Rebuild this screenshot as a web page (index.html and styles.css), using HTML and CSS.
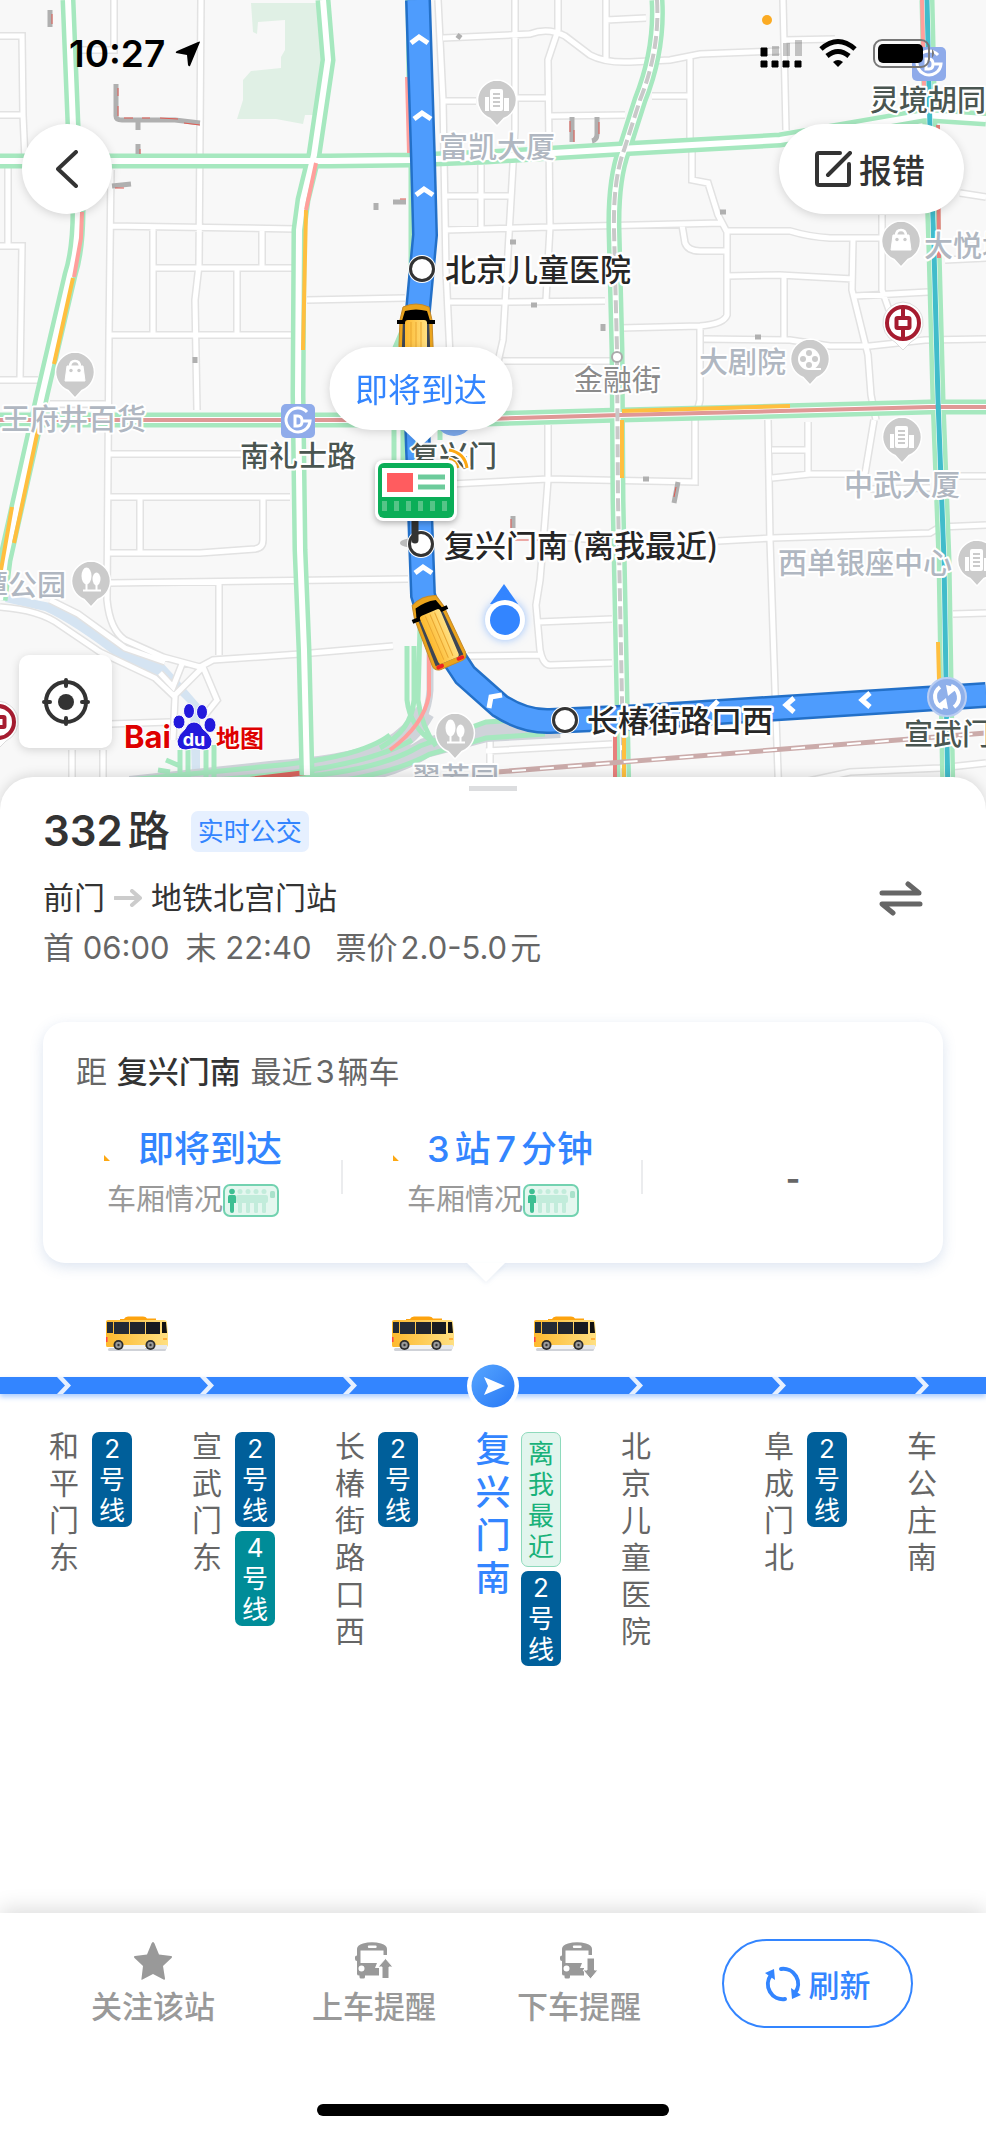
FILE: index.html
```html
<!DOCTYPE html>
<html lang="zh-CN">
<head>
  <meta charset="UTF-8" />
  <meta name="viewport" content="width=device-width, initial-scale=1.0" />
  <title>332路 - 实时公交</title>
  <link rel="stylesheet" href="styles.css">
</head>
<body>
  <!-- shared icons -->
  <svg class="defs" width="0" height="0" aria-hidden="true">
    <defs>
      <linearGradient id="busPaint" x1="0" y1="0" x2="1" y2="0">
        <stop offset="0" stop-color="#fdb92e" />
        <stop offset="1" stop-color="#ffe082" />
      </linearGradient>
      <linearGradient id="nowPaint" x1="0" y1="0" x2="1" y2="1">
        <stop offset="0" stop-color="#56a5ff" />
        <stop offset="1" stop-color="#2878f5" />
      </linearGradient>

      <symbol id="busSide" viewBox="0 0 64 36">
        <rect x="3" y="32" width="58" height="3" rx="1.500" fill="#cfd2d8" />
        <path d="M19 3 Q20 0.500 23 0.500 H38 Q41 0.500 42 2.500 H51 V5 H15 V3 Z" fill="#fda30e" />
        <path d="M3 4 H59 Q62 4 62 7 L63 18 V29 Q63 31 61 31 H2 Q1 31 1 29 V6 Q1 4 3 4 Z" fill="url(#busPaint)" />
        <rect x="2" y="6" width="6" height="11" fill="#242b35" />
        <rect x="9" y="6" width="15" height="12" fill="#242b35" />
        <rect x="25" y="6" width="15" height="12" fill="#20252d" />
        <rect x="41" y="6" width="14" height="12" fill="#181b20" />
        <path d="M57 6 H61 L62 17 H57 Z" fill="#111" />
        <rect x="1" y="21" width="1.500" height="5" fill="#f44" />
        <rect x="58" y="22" width="4" height="2" fill="#ffb03a" />
        <rect x="18" y="29" width="22" height="4" fill="#f2f2f2" />
        <rect x="50" y="29" width="12" height="4" fill="#e6e8eb" />
        <circle cx="13.500" cy="29" r="5" fill="#2b2b2b" /><circle cx="13.500" cy="29" r="3.200" fill="#9a9a9a" /><circle cx="13.500" cy="29" r="1.200" fill="#333" />
        <circle cx="45.500" cy="29" r="5" fill="#2b2b2b" /><circle cx="45.500" cy="29" r="3.200" fill="#9a9a9a" /><circle cx="45.500" cy="29" r="1.200" fill="#333" />
      </symbol>

      <symbol id="crowd" viewBox="0 0 56 33">
        <rect x="1" y="1" width="54" height="31" rx="6" fill="#e4f7ef" stroke="#72d2b0" stroke-width="2" />
        <g fill="#c2ecdb">
          <circle cx="17" cy="7.500" r="2.500" /><circle cx="25" cy="7.500" r="2.500" /><circle cx="33" cy="7.500" r="2.500" /><circle cx="41" cy="7.500" r="2.500" />
          <rect x="13" y="11" width="32" height="8" rx="2" />
          <rect x="15" y="17" width="4" height="12" rx="1.500" /><rect x="23" y="17" width="4" height="12" rx="1.500" /><rect x="31" y="17" width="4" height="12" rx="1.500" /><rect x="39" y="17" width="4" height="12" rx="1.500" />
          <rect x="47" y="7" width="5" height="7" rx="1.500" fill="#a9e2cb" />
        </g>
        <g fill="#3dbf92">
          <circle cx="9" cy="7.500" r="2.800" />
          <path d="M6.500 11 H11.500 Q13 11 13 13 V19 H11 V27 Q11 29 9 29 Q7 29 7 27 V19 H5 V13 Q5 11 6.500 11 Z" />
        </g>
      </symbol>

      <symbol id="chevron" viewBox="0 0 16 17">
        <path d="M1 0 H7 L15 8.500 L7 17 H1 L9 8.500 Z" fill="#e6f0ff" />
      </symbol>

      <symbol id="tabBus" viewBox="0 0 38 38">
        <path fill-rule="evenodd" d="M8 1.500 Q17 -1 26 1.500 Q32 3 32 7 V13 H28.500 V8.500 H5.500 V21 H22 L20 26 H24 V33.500 H10 V35 Q10 36.500 8.500 36.500 H6 Q4.500 36.500 4.500 35 V33.500 Q2 33.500 2 32 V19 Q0 19 0 17 V15 Q0 13.500 2 13.500 V7 Q2 3 8 1.500 Z M14 3.500 Q12.800 3.500 12.800 4.700 Q12.800 6 14 6 H20.500 Q21.700 6 21.700 4.700 Q21.700 3.500 20.500 3.500 Z M6.500 23.500 A3 3 0 1 0 6.500 29.500 A3 3 0 1 0 6.500 23.500 Z" />
      </symbol>

      <!-- map pins -->
      <symbol id="pin" viewBox="0 0 44 52" overflow="visible">
        <path d="M22 2 A20 20 0 0 1 29 40.500 L22 48 L15 40.500 A20 20 0 0 1 22 2 Z" fill="#cbcbcb" stroke="#fff" stroke-width="1.500" />
      </symbol>
      <symbol id="pinBuilding" viewBox="0 0 44 52">
        <use href="#pin" width="44" height="52" />
        <rect x="15" y="11" width="13" height="22" rx="2" fill="#fff" />
        <path d="M18 16 H25 M18 20 H25 M18 24 H25 M18 28 H25" stroke="#cbcbcb" stroke-width="2" />
        <rect x="10" y="19" width="4" height="14" fill="#fff" />
        <rect x="29" y="20" width="5" height="13" fill="#fff" />
      </symbol>
      <symbol id="pinBag" viewBox="0 0 44 52">
        <use href="#pin" width="44" height="52" />
        <path d="M14 16 H30 L32 31 H12 Z" fill="#fff" stroke="#fff" stroke-width="1" stroke-linejoin="round" />
        <path d="M17 17 Q17 11 22 11 Q27 11 27 17" fill="none" stroke="#fff" stroke-width="2.500" />
        <circle cx="18" cy="20.500" r="1.700" fill="#cbcbcb" /><circle cx="26" cy="20.500" r="1.700" fill="#cbcbcb" />
      </symbol>
      <symbol id="pinTree" viewBox="0 0 44 52">
        <use href="#pin" width="44" height="52" />
        <ellipse cx="17.500" cy="17" rx="5" ry="8.500" fill="#fff" /><ellipse cx="27.500" cy="20" rx="4" ry="6.500" fill="#fff" />
        <path d="M17.500 20 V31 M27.500 22 V31 M14 31.500 H32" stroke="#fff" stroke-width="2" />
      </symbol>
      <symbol id="pinFilm" viewBox="0 0 44 52">
        <use href="#pin" width="44" height="52" />
        <circle cx="21" cy="22" r="11" fill="#fff" /><path d="M21 31 H33 V33 H21 Z" fill="#fff" />
        <g fill="#cbcbcb"><circle cx="21" cy="16" r="3" /><circle cx="21" cy="28" r="3" /><circle cx="15" cy="22" r="3" /><circle cx="27" cy="22" r="3" /></g>
      </symbol>
      <symbol id="bank" viewBox="0 0 44 52">
        <path d="M22 1 A21 21 0 0 1 30 41 L22 49 L14 41 A21 21 0 0 1 22 1 Z" fill="#fff" stroke="#ddd" />
        <circle cx="22" cy="22" r="16" fill="none" stroke="#a61c30" stroke-width="4" />
        <rect x="15.500" y="17" width="13" height="10" rx="1" fill="none" stroke="#a61c30" stroke-width="4" />
        <path d="M22 6 V16 M22 28 V38" stroke="#a61c30" stroke-width="4" />
      </symbol>
      <symbol id="metro" viewBox="0 0 34 34">
        <rect width="34" height="34" rx="5" fill="#8fabea" />
        <path d="M26 8 A12 12 0 1 0 29 17 H21" fill="none" stroke="#fff" stroke-width="3" />
        <path d="M14 12 H17 Q21 12 21 17 Q21 22 17 22 H14 Z" fill="none" stroke="#fff" stroke-width="3" />
      </symbol>
      <symbol id="busTop" viewBox="0 0 44 76">
        <path d="M9 5 Q22 -1 35 5 L38 18 L40 68 Q40 74 34 75 H10 Q4 74 4 68 L6 18 Z" fill="#eba41c" stroke="#c58a2a" />
        <path d="M9 16 H35 L37 70 H7 Z" fill="#3d4654" />
        <path d="M11 9 Q22 6 33 9 L37 22 H7 Z" fill="#000" />
        <path d="M3 20 H9 M35 20 H41" stroke="#000" stroke-width="4" />
        <rect x="11" y="18" width="22" height="52" rx="3" fill="url(#busPaint)" />
        <path d="M17 20 V67 M22 20 V67 M27 20 V67" stroke="#e9a733" stroke-width="1" />
        <rect x="7" y="70" width="8" height="4" rx="2" fill="#e22" /><rect x="29" y="70" width="8" height="4" rx="2" fill="#e22" />
      </symbol>
      <symbol id="station" viewBox="0 0 30 30">
        <circle cx="15" cy="15" r="14" fill="#fff" /><circle cx="15" cy="15" r="11.500" fill="#fff" stroke="#333" stroke-width="3" />
      </symbol>
    </defs>
  </svg>

  <section class="map">
    <svg class="map-canvas" viewBox="0 0 986 810" role="img" aria-label="332路线路地图">
      <defs>
        <path id="minorRoads" d="M0 36 H22 L23 115 L25 160 M0 115 H23 M114 0 V50 H80 M201 0 L199 265 L195 300 L197 410 M111 170 L109 335 L107 600 Q110 630 125 640 L163 657 L200 667 L213 660 L300 654 L393 646 M110 226 L296 229 M153 229 V333 M153 268 H296 M262 229 V268 M237 268 V333 M109 335 H296 M8 168 V246 M0 246 H22 L20 380 M0 380 H38 M50 404 H107 M307 300 L405 298
          M107 454 H290 M107 497 H290 M140 497 V553 M263 497 V540 Q263 548 255 549 L200 553 H107 M75 583 H110 L408 579 M219 583 V655
          M0 607 Q40 610 60 625 L100 652 L155 678 L175 697 L173 740 M50 600 L78 614 L125 648 L165 662 M173 697 L203 667 L217 700 L205 715 M110 724 L170 722 M72 750 V800 M103 750 V800 M160 673 L173 687 L182 664
          M438 0 L443 100 L446 270 L452 400 M443 38 L530 34 Q548 27 565 36 L590 55 Q605 63 630 62 L670 60 L700 54 L780 51 M515 0 V130 L507 270 L503 340 L495 375 M558 0 V30 L548 60 L550 227 L546 300 M606 0 V60 M606 20 L646 18 M444 101 H476 M516 98 H550 M550 116 L625 115 M652 96 H690 M690 58 V140 M692 150 V180 L708 183 L718 215 L727 232 V315 Q724 324 700 326 L620 328
          M445 196 H510 M445 230 L550 227 L722 223 M481 165 V230 M682 225 L685 243 Q688 251 700 251 H727 M783 0 L786 130 M784 40 L835 39 M727 231 L790 231 Q810 237 830 238 H884 M727 276 L780 275 L853 279 M853 240 L852 290 L868 355 L871 395 L876 420 M784 275 V340 M855 296 L928 292 M882 215 V290 L889 310 M700 328 V400 L695 420 V482 L548 479 L451 484 M704 339 L790 340 L830 346 H870 L925 340 L986 339 M450 302 H510 L605 301 M503 361 H610 M960 193 L986 197 M945 260 L986 258
          M548 425 V480 L545 520 L540 580 L536 605 L540 650 Q543 665 550 665 L612 663 M468 656 L540 655 M538 622 L612 619 M768 420 L770 540 L775 690 L779 800 M772 450 H810 M808 422 V474 M772 478 L810 474 H865 L874 420 M545 536 L612 541 M718 541 L772 538 L930 533 L940 527 L986 525 M950 476 H986 M870 489 L930 488 M953 614 L986 613 M486 751 L612 744 M490 740 V800 M790 785 L850 772 L940 768 L986 763" />
        <path id="roadWest" d="M68 0 L73 125 L78 210 Q78 250 70 275 L42 395 L5 560 L0 600" />
        <path id="roadB" d="M323 0 L328 60 L314 155 L303 200 L299 230 L298 395 L300 550 L304 650 L307 775" />
        <path id="roadNorth" d="M0 161 H330 L410 160 L486 157 L620 149 L780 140 L850 128 L925 115 L986 119" />
        <path id="roadSouth" d="M0 420 H300 L400 420 L486 419 L620 415 L780 411 L930 407 L986 407" />
        <path id="roadE" d="M657 0 Q660 50 640 100 L624 150 Q613 180 614 230 L617 350 L618 500 L621 650 L624 800" />
        <path id="roadF" d="M927 0 L930 130 L934 250 L938 400 L944 560 L948 800" />
        <path id="ring" d="M130 786 L270 771 Q360 764 388 748 Q412 735 425 712 M280 786 L360 773 Q400 765 425 748 L486 732 L560 728" />
        <path id="ringStrands" d="M407 646 V700 Q410 728 436 744 M414 646 V700 Q412 730 380 748 M421 590 L418 700 Q422 728 436 746 M130 780 L270 766 Q360 758 390 735 M140 787 L280 774 Q370 764 412 740 M300 777 Q380 770 420 746 L486 722 L520 720 M310 785 Q390 776 430 754 L486 738 L545 734" />
        <path id="route" d="M418 0 L423 160 L425 235 L418 310 L417 420 L421 540 L423 595 L432 625 L465 675 L500 706 Q525 722 550 721 L640 717 L986 695" />
      </defs>
      <rect width="986" height="810" fill="#f8f8f8" />
      <path d="M251 3 L318 3 L325 60 L313 115 L305 115 L303 124 L276 119 H237 L243 100 V80 L251 71 L281 68 V57 L285 50 V20 L258 22 L257 34 L253 32 Z" fill="#e0f0e5" />
      <path d="M7 594 L50 603 Q78 614 110 640 L160 660 L180 682 L200 705 V780 H192 L190 705 L165 680 L120 660 Q75 625 45 611 L5 602 Z" fill="#d5e4f2" />
      <use href="#minorRoads" class="minor-edge" />
      <use href="#minorRoads" class="minor-fill" />

      <!-- elevated ring road -->
      <use href="#ring" class="ring-grey" />
      <path d="M430 600 V690 Q428 722 405 742" fill="none" stroke="#cfd3d9" stroke-width="7" />
      <use href="#ringStrands" class="ring-thin" />
      <path d="M394 425 V460 M403 425 V460 M440 425 V440 M180 750 V790 M188 750 V790 M206 750 V790 M214 745 V790 M166 760 L180 766 M158 770 L170 772" class="ring-thin" />
      <path d="M429 655 V695 Q424 725 390 750" fill="none" stroke="#ff9f9c" stroke-width="4" />
      <path d="M245 780 L310 772" stroke="#d9655f" stroke-width="5" />

      <g class="major">
        <use href="#roadWest" /><use href="#roadB" /><use href="#roadNorth" /><use href="#roadSouth" /><use href="#roadE" /><use href="#roadF" />
      </g>
      <g class="major-inner">
        <use href="#roadWest" /><use href="#roadB" /><use href="#roadNorth" /><use href="#roadSouth" /><use href="#roadE" /><use href="#roadF" />
      </g>
      <use href="#roadSouth" fill="none" stroke="#e09896" stroke-width="4" />
      <use href="#roadE" fill="none" stroke="#c9c9c9" stroke-width="4" stroke-dasharray="13 5" />
      <use href="#roadF" fill="none" stroke="#41bccb" stroke-width="5" />
      <path d="M408 0 L410 155 M411 165 V310 L394 350" class="ring-thin" />
      <g fill="none" stroke="#ffbf3f" stroke-width="4">
        <path d="M73 278 L54 364 M39 425 L14 543 M12 507 L1 570 M306 210 L303 350 M622 411 L790 406 M622 420 V478 M624 735 V780 M938 642 L939 680" />
      </g>
      <g fill="none" stroke="#ff9f9c" stroke-width="4">
        <path d="M82 212 L81 238 L74 277 M316 163 L306 210 M922 0 L924 88 M407 77 L409 153" />
        <path d="M938 125 L939 258 M615 735 V780" stroke="#e8807c" />
      </g>
      <path d="M497 772 L986 733" stroke="#cbabaa" stroke-width="5" />
      <path d="M512 771 L986 733" stroke="#fff" stroke-width="2" stroke-dasharray="14 14" />
      <g fill="none" stroke="#b0b0b0" stroke-width="5">
        <path d="M50 10 V27 M116 84 V116 Q116 120 122 120 L175 120 L200 123 M138 122 V130 M138 144 V154 M112 186 L131 184 M393 202 H406 M376 203 V210 M195 357 V363 M457 35 L461 38 M572 117 V142 M597 117 V134 Q597 140 592 141 M720 212 H726 M510 242 H516 M531 305 H537 M755 337 H761 M643 479 H649 M678 482 L674 503 M513 516 V528 M603 324 V331" />
      </g>
      <path d="M52 14 V24 M118 88 V96 M118 106 V116 M124 118 H133 M142 118 H150 M160 118 L178 119 M184 123 L200 125 M140 149 V154 M115 188 H124 M400 199 H406 M570 121 V132 M574 130 V142 M599 122 V134 M676 487 L674 497 M511 519 V528 M515 540 H538" fill="none" stroke="#e05a52" stroke-width="1" />

      <!-- bus route -->
      <use href="#route" class="route-edge" />
      <use href="#route" class="route-fill" />
      <g class="route-arrows">
        <path d="M411 43 L419 37 L428 43 M414 119 L422 113 L431 119 M416 195 L424 189 L433 195 M415 573 L423 567 L432 573 M489 708 L491 697 L502 695 M718 701 L711 708 L718 715 M794 698 L786 705 L794 712 M870 693 L862 700 L870 707" />
      </g>

      <use href="#pinBag" x="53" y="350" width="44" height="52" />
      <use href="#pinBuilding" x="475" y="78" width="44" height="52" />
      <use href="#pinBag" x="879" y="219" width="44" height="52" />
      <use href="#pinFilm" x="788" y="337" width="44" height="52" />
      <use href="#pinBuilding" x="880" y="415" width="44" height="52" />
      <use href="#pinBuilding" x="955" y="538" width="44" height="52" />
      <use href="#pinTree" x="69" y="559" width="44" height="52" />
      <use href="#pinTree" x="433" y="711" width="44" height="52" />
      <use href="#bank" x="881" y="301" width="44" height="52" />
      <use href="#bank" x="-24" y="700" width="44" height="52" />
      <use href="#metro" x="281" y="404" width="34" height="34" />
      <use href="#metro" x="912" y="47" width="34" height="34" />
      <circle cx="454" cy="417" r="19" fill="#7ca8ea" />
      <circle cx="617" cy="357" r="5" fill="#fff" stroke="#aaa" stroke-width="2" />
      <circle cx="947" cy="697" r="19" fill="#8fb0ea" stroke="#b9cdf2" stroke-width="2" />
      <path d="M943 708 A12 12 0 0 1 940 687 M951 686 A12 12 0 0 1 954 707" fill="none" stroke="#fff" stroke-width="4" />
      <path d="M936 706 L948 709 L946 698 Z M958 688 L946 685 L948 696 Z" fill="#fff" />

      <g class="poi">
        <text x="439" y="158">富凯大厦</text>
        <text x="1" y="430">王府井百货</text>
        <text x="924" y="257">大悦城</text>
        <text x="699" y="373">大剧院</text>
        <text x="844" y="496">中武大厦</text>
        <text x="778" y="574">西单银座中心</text>
        <text x="-21" y="596">潭公园</text>
        <text x="412" y="789">翠芳园</text>
      </g>
      <text class="area" x="574" y="391">金融街</text>
      <g class="metro-name">
        <text x="870" y="111">灵境胡同</text>
        <text x="240" y="467">南礼士路</text>
        <text x="410" y="467">复兴门</text>
        <text x="904" y="745">宣武门</text>
      </g>

      <use href="#busTop" x="394" y="302" width="44" height="76" />
      <use href="#busTop" x="415" y="593" width="44" height="76" transform="rotate(-23 437 631)" />
      <ellipse cx="415" cy="543" rx="15" ry="5" fill="#bbb" />
      <use href="#station" x="407" y="254" width="30" height="30" />
      <use href="#station" x="406" y="529" width="30" height="30" />
      <use href="#station" x="550" y="705" width="30" height="30" />
      <path d="M415 515 V540" stroke="#333" stroke-width="7" stroke-linecap="round" />
      <g class="stop-name">
        <text x="445" y="281">北京儿童医院</text>
        <text x="444" y="557">复兴门南<tspan dx="4">(离我最近)</tspan></text>
        <text x="587" y="732">长椿街路口西</text>
      </g>

      <!-- nearest stop board -->
      <g fill="none" stroke="#fff" stroke-width="7"><path d="M448 459 Q455 461 457 468 M449 451 Q465 453 467 468" /></g>
      <g fill="none" stroke="#fda812" stroke-width="3"><path d="M449 459 Q456 461 458 468 M449 450 Q465 453 467 468" /></g>
      <rect class="board-shadow" x="375" y="460" width="82" height="61" rx="8" fill="#fff" />
      <rect x="378" y="463" width="76" height="55" rx="6" fill="#0bae58" />
      <rect x="382" y="468" width="68" height="29" fill="#fff" />
      <rect x="387" y="473" width="26" height="19" fill="#ff5c5f" />
      <path d="M418 477 H445 M418 487 H445" stroke="#6ccb9b" stroke-width="5" />
      <path d="M382 506 H450" stroke="#55c487" stroke-width="10" stroke-dasharray="5 7" />

      <g class="bubble">
        <path d="M371 347 H471 A41 41 0 0 1 471 430 H438 L421 446 L404 430 H371 A41 41 0 0 1 371 347 Z" />
        <text x="421" y="402">即将到达</text>
      </g>

      <!-- my position -->
      <path d="M504 584 L518 604 H490 Z" fill="#3385ff" />
      <circle class="me-ring" cx="505" cy="620" r="20" fill="#fff" />
      <circle cx="505" cy="620" r="15" fill="#3385ff" />

      <!-- map provider -->
      <g class="baidu">
        <text x="124" y="748" class="baidu-latin">Bai</text>
        <g fill="#2319dc" stroke="#fff" stroke-width="1">
          <ellipse cx="179" cy="722" rx="6" ry="7" /><ellipse cx="189" cy="711" rx="5.500" ry="7.500" /><ellipse cx="202" cy="712" rx="5.500" ry="7.500" /><ellipse cx="210" cy="725" rx="6" ry="7.500" />
          <path d="M194 722 Q200 722 203 729 Q211 735 212 741 Q212 750 203 750 Q194 747 186 750 Q177 750 177 741 Q178 735 185 729 Q188 722 194 722 Z" />
        </g>
        <text x="194" y="746" class="baidu-du">du</text>
        <text x="216" y="747" class="baidu-cn">地图</text>
      </g>
    </svg>

    <div class="status-bar">
      <span class="clock">10:27</span>
      <svg class="nav-icon" viewBox="0 0 26 26" width="26" height="26" aria-hidden="true"><path d="M25 1 L15 25 Q14 26 13 24 L12 14 L1 12 Q0 11 2 10 L23 1 Q25 0 25 1 Z" /></svg>
      <svg class="system-icons" viewBox="0 0 180 74" width="180" height="74" aria-hidden="true">
        <circle cx="12" cy="20" r="5" fill="#fbab23" />
        <path d="M6 48 h6 v8 h-6 z M6 61 h6 v6 h-6 z M17 61 h6 v6 h-6 z M28 61 h6 v6 h-6 z M40 61 h6 v6 h-6 z" stroke="#000" stroke-linejoin="round" />
        <path d="M17 46 h7 v10 h-7 z M28 43 h7 v13 h-7 z M40 40 h7 v16 h-7 z" fill="#000" opacity="0.220" />
        <path d="M66 49 Q83 34 100 49" fill="none" stroke="#000" stroke-width="5" />
        <path d="M72 56 Q83 47 94 56" fill="none" stroke="#000" stroke-width="5" />
        <path d="M78 62 Q83 58 88 62 L83 67 Z" />
        <rect x="119" y="40" width="55" height="27" rx="8" fill="none" stroke="#777" stroke-width="2" />
        <rect x="123" y="44" width="45" height="19" rx="5" />
        <path d="M177 49 Q181 53 177 58 Z" fill="#777" />
      </svg>
    </div>

    <button class="map-btn back-btn" type="button" aria-label="返回">
      <svg viewBox="0 0 22 38" width="22" height="38"><path d="M20 2 L2 19 L20 36" /></svg>
    </button>
    <button class="map-btn report-btn" type="button">
      <svg viewBox="0 0 38 36" width="38" height="36"><path d="M25 2 H4 Q2 2 2 4 V32 Q2 34 4 34 H32 Q34 34 34 32 V13 M13 24 L35 2" /></svg>
      报错
    </button>
    <button class="map-btn locate-btn" type="button" aria-label="定位">
      <svg viewBox="0 0 48 48" width="48" height="48"><circle cx="24" cy="24" r="20" /><circle cx="24" cy="24" r="8" fill="#333" stroke="none" /><path d="M24 2 V8 M24 40 V46 M2 24 H8 M40 24 H46" /></svg>
    </button>
  </section>

  <main class="sheet">
    <div class="handle"></div>

    <header class="route">
      <div class="route-title">
        <h1>332<span>路</span></h1>
        <span class="tag">实时公交</span>
      </div>
      <div class="direction">
        <span>前门</span>
        <svg viewBox="0 0 28 18" width="28" height="18" aria-hidden="true"><path d="M1 9 H25 M18 2 L26 9 L18 16" /></svg>
        <span>地铁北宫门站</span>
        <button class="swap-btn" type="button" aria-label="换向">
          <svg viewBox="0 0 44 36" width="44" height="36"><path d="M3 13 H40 L29 4 M41 24 H3 L14 33" /></svg>
        </button>
      </div>
      <p class="times"><span>首 06:00</span><span>末 22:40</span><span class="fare">票价<span class="num">2.0-5.0</span>元</span></p>
    </header>

    <section class="card">
      <h2>距 <b>复兴门南</b> 最近<span class="num">3</span>辆车</h2>
      <div class="arrivals">
        <div class="arrival">
          <p class="eta"><i class="live"></i>即将到达</p>
          <p class="load">车厢情况<svg width="56" height="33"><use href="#crowd" /></svg></p>
        </div>
        <div class="arrival">
          <p class="eta"><i class="live"></i>3<span class="unit">站</span>7<span class="unit">分钟</span></p>
          <p class="load">车厢情况<svg width="56" height="33"><use href="#crowd" /></svg></p>
        </div>
        <div class="arrival none">-</div>
      </div>
    </section>

    <section class="line">
      <div class="bus-row">
        <span><svg width="64" height="36"><use href="#busSide" /></svg></span>
        <span></span>
        <span><svg width="64" height="36"><use href="#busSide" /></svg></span>
        <span><svg width="64" height="36"><use href="#busSide" /></svg></span>
        <span></span>
        <span></span>
      </div>
      <div class="track">
        <span><svg width="16" height="17"><use href="#chevron" /></svg></span>
        <span><svg width="16" height="17"><use href="#chevron" /></svg></span>
        <span><svg width="16" height="17"><use href="#chevron" /></svg></span>
        <span class="here"><svg viewBox="0 0 52 52" width="52" height="52"><circle cx="26" cy="26" r="26" fill="#fff" /><circle cx="26" cy="26" r="21.500" fill="url(#nowPaint)" /><path d="M17 17 L38 26 L17 35 L21 26 Z" fill="#fff" /></svg></span>
        <span><svg width="16" height="17"><use href="#chevron" /></svg></span>
        <span><svg width="16" height="17"><use href="#chevron" /></svg></span>
        <span><svg width="16" height="17"><use href="#chevron" /></svg></span>
      </div>
      <ol class="stops">
        <li><span class="name">和平门东</span><div class="badges"><span class="badge line2">2号线</span></div></li>
        <li><span class="name">宣武门东</span><div class="badges"><span class="badge line2">2号线</span><span class="badge line4">4号线</span></div></li>
        <li><span class="name">长椿街路口西</span><div class="badges"><span class="badge line2">2号线</span></div></li>
        <li class="current"><span class="name">复兴门南</span><div class="badges"><span class="badge nearest">离我最近</span><span class="badge line2">2号线</span></div></li>
        <li><span class="name">北京儿童医院</span></li>
        <li><span class="name">阜成门北</span><div class="badges"><span class="badge line2">2号线</span></div></li>
        <li><span class="name">车公庄南</span></li>
      </ol>
    </section>
  </main>

  <footer class="bottom">
    <nav class="actions">
      <button class="action" type="button">
        <svg viewBox="0 0 38 38" width="38" height="38"><path d="M19 0 Q20 0 20.500 1.500 L25 12.500 L37 14 Q39 14.500 37.500 16 L29 24 L31 36.500 Q31 38.500 29.500 37.500 L19 32 L8.500 37.500 Q7 38.500 7.500 36.500 L9 24 L0.500 16 Q-1 14.500 1 14 L13 12.500 L17.500 1.500 Q18 0 19 0 Z" /></svg>
        关注该站
      </button>
      <button class="action" type="button">
        <svg viewBox="0 0 38 38" width="38" height="38"><use href="#tabBus" /><path d="M30.500 16.500 L38 25 H34 V36.500 H27 V25 H23 Z" stroke="#fff" stroke-width="1" /></svg>
        上车提醒
      </button>
      <button class="action" type="button">
        <svg viewBox="0 0 38 38" width="38" height="38"><use href="#tabBus" /><path d="M30.500 37 L38 28 H34.500 V16 H27 V28 H23 Z" stroke="#fff" stroke-width="1" /></svg>
        下车提醒
      </button>
      <button class="refresh" type="button">
        <svg viewBox="0 0 36 36" width="36" height="36"><path d="M20 33 A15 15 0 0 1 6 9 M16 3 A15 15 0 0 1 30 27" fill="none" stroke="#3385ff" stroke-width="4" stroke-linecap="round" /><path d="M0 7 L9 3 L10 14 Z M36 29 L27 33 L26 22 Z" fill="#3385ff" /></svg>
        刷新
      </button>
    </nav>
    <div class="home-bar"></div>
  </footer>
</body>
</html>
```
FILE: styles.css
```css
* {
  margin: 0;
  padding: 0;
  box-sizing: border-box;
}

body {
  min-height: 100vh;
  display: flex;
  flex-direction: column;
  background: #fff;
  color: #333;
  font-family: Inter, "Noto Sans CJK SC", sans-serif;
  font-size: 31px;
  overflow-x: hidden;
}

button {
  font: inherit;
  color: inherit;
  background: none;
  border: none;
  cursor: pointer;
}

svg {
  display: block;
}

.defs {
  position: absolute;
}

/* map */
.map {
  position: relative;
}

.map-canvas {
  width: 100%;
  height: auto;
  font-family: "Noto Sans CJK SC", sans-serif;
}

.minor-edge {
  fill: none;
  stroke: #e2e2e2;
  stroke-width: 8;
}

.minor-fill {
  fill: none;
  stroke: #fff;
  stroke-width: 5;
}

.major {
  fill: none;
  stroke: #a6e8bf;
  stroke-width: 15;
}

.major-inner {
  fill: none;
  stroke: #fff;
  stroke-width: 6;
}

.ring-grey {
  fill: none;
  stroke: #cfd3d9;
  stroke-width: 20;
}

.ring-thin {
  fill: none;
  stroke: #a6e8bf;
  stroke-width: 5;
}

.route-edge {
  fill: none;
  stroke: #2370c8;
  stroke-width: 26;
}

.route-fill {
  fill: none;
  stroke: #4e9cfd;
  stroke-width: 21;
}

.route-arrows {
  fill: none;
  stroke: #fff;
  stroke-width: 5;
}

.poi,
.metro-name,
.area {
  font-size: 29px;
  paint-order: stroke;
  stroke: #fff;
  stroke-width: 4px;
  stroke-linejoin: round;
}

.poi {
  fill: #b0b7c1;
  font-weight: 500;
}

.area {
  fill: #8b8b8b;
}

.metro-name {
  fill: #4a5651;
  font-weight: 500;
}

.stop-name {
  font-size: 31px;
  font-weight: 500;
  fill: #262626;
  paint-order: stroke;
  stroke: #fff;
  stroke-width: 5px;
  stroke-linejoin: round;
}

.board-shadow {
  filter: drop-shadow(0 2px 3px rgba(0, 0, 0, 0.3));
}

.bubble {
  fill: #fff;
  filter: drop-shadow(0 2px 5px rgba(0, 0, 0, 0.15));
}

.bubble text {
  fill: #3385ff;
  font-size: 33px;
  text-anchor: middle;
}

.me-ring {
  filter: drop-shadow(0 0 4px rgba(51, 133, 255, 0.5));
}

.baidu text {
  fill: #de0000;
  font-weight: 700;
  paint-order: stroke;
  stroke: #fff;
  stroke-width: 2px;
}

.baidu .baidu-latin {
  font-family: Inter, sans-serif;
  font-size: 31px;
}

.baidu .baidu-du {
  font-family: Inter, sans-serif;
  font-size: 18px;
  fill: #fff;
  stroke: none;
  text-anchor: middle;
}

.baidu .baidu-cn {
  font-size: 24px;
}

.status-bar {
  position: absolute;
  top: 0;
  left: 0;
  right: 0;
  display: flex;
  align-items: flex-start;
  padding: 0 51px 0 69px;
  color: #000;
}

.clock {
  margin-top: 34px;
  font-size: 37px;
  line-height: 40px;
  font-weight: 600;
}

.nav-icon {
  margin: 41px 0 0 10px;
}

.system-icons {
  margin-left: auto;
}

.map-btn {
  position: absolute;
  display: flex;
  align-items: center;
  justify-content: center;
  background: #fff;
  box-shadow: 0 2px 10px rgba(0, 0, 0, 0.15);
}

.map-btn svg {
  fill: none;
  stroke: #333;
  stroke-width: 4;
  stroke-linecap: round;
  stroke-linejoin: round;
}

.back-btn {
  top: 124px;
  left: 22px;
  width: 90px;
  height: 90px;
  border-radius: 50%;
}

.report-btn {
  top: 124px;
  right: 22px;
  height: 90px;
  padding: 0 39px 0 36px;
  gap: 6px;
  border-radius: 45px;
  font-size: 33px;
  font-weight: 500;
}

.locate-btn {
  left: 19px;
  bottom: 62px;
  width: 93px;
  height: 93px;
  border-radius: 10px;
}

/* sheet */
.sheet {
  position: relative;
  flex: 1;
  margin-top: -33px;
  border-radius: 33px 33px 0 0;
  background: #fff;
  box-shadow: 0 -2px 12px rgba(0, 0, 0, 0.12);
}

.handle {
  width: 48px;
  height: 5px;
  margin: 9px auto 16px;
  background: #dcdddf;
}

.sheet::before {
  content: "";
  display: table;
}

.route {
  padding: 0 43px;
}

.num {
  margin: 0 3px;
}

.route-title {
  display: flex;
  align-items: center;
  gap: 21px;
  height: 48px;
}

h1 {
  font-size: 42px;
  line-height: 48px;
  font-weight: 600;
}

h1 span {
  margin-left: 5px;
  font-weight: 500;
}

.tag {
  padding: 0 7px;
  border-radius: 7px;
  background: #e6f0ff;
  color: #3385ff;
  font-size: 26px;
  line-height: 41px;
}

.direction {
  display: flex;
  align-items: center;
  gap: 9px;
  margin-top: 23px;
  line-height: 40px;
}

.direction svg {
  fill: none;
  stroke: #ccc;
  stroke-width: 4;
  stroke-linecap: round;
  stroke-linejoin: round;
}

.swap-btn {
  margin: 0 20px 0 auto;
}

.swap-btn .icon,
.swap-btn svg {
  stroke: #666;
  stroke-width: 5;
}

.times {
  display: flex;
  gap: 16px;
  margin-top: 10px;
  line-height: 40px;
  color: #666;
}

.times .fare {
  margin-left: 8px;
}

.card {
  position: relative;
  margin: 54px 43px 0;
  padding: 30px 0 43px;
  border-radius: 22px;
  background: #fff;
  box-shadow: 0 4px 14px rgba(80, 120, 180, 0.2);
}

.card::after {
  content: "";
  position: absolute;
  top: 100%;
  left: 50%;
  margin-left: -26px;
  border: 19px solid transparent;
  border-top-color: #fff;
  border-bottom: none;
  filter: drop-shadow(0 2px 2px rgba(80, 120, 180, 0.1));
}

h2 {
  padding: 0 33px;
  font-size: 31px;
  line-height: 40px;
  font-weight: 400;
  color: #666;
}

h2 b {
  margin: 0 1px;
  font-weight: 500;
  color: #333;
}

.arrivals {
  display: flex;
  margin-top: 32px;
}

.arrival {
  position: relative;
  flex: 1;
  display: flex;
  flex-direction: column;
  align-items: center;
}

.arrival + .arrival::before {
  content: "";
  position: absolute;
  left: -2px;
  top: 36px;
  width: 2px;
  height: 34px;
  background: #ebecee;
}

.eta {
  display: flex;
  align-items: center;
  font-size: 36px;
  line-height: 50px;
  font-weight: 500;
  color: #3385ff;
}

.unit {
  margin: 0 5px;
}

.unit:last-child {
  margin-right: 0;
}

.live {
  width: 6px;
  height: 6px;
  margin: 18px 28px 0 0;
  background: #fda812;
  clip-path: polygon(0 0, 100% 100%, 0 100%);
}

.load {
  display: flex;
  align-items: center;
  margin-top: 6px;
  font-size: 29px;
  line-height: 40px;
  color: #999;
}

.arrival.none {
  justify-content: center;
  padding-top: 12px;
  font-weight: 700;
  color: #666;
}

/* line diagram */
.line {
  overflow: hidden;
}

.bus-row,
.track,
.stops {
  display: flex;
  justify-content: center;
}

.bus-row {
  margin-top: 53px;
  padding-left: 2px;
  height: 36px;
}

.bus-row span,
.track span {
  flex: 0 0 14.5%;
  display: flex;
  align-items: center;
  justify-content: center;
}

.track {
  height: 17px;
  margin-top: 25px;
  background: #3385ff;
  box-shadow: 0 3px 5px rgba(51, 133, 255, 0.4);
}

.track .here svg {
  flex: none;
}

.stops {
  margin-top: 34px;
  list-style: none;
}

.stops li {
  flex: 0 0 14.5%;
  display: grid;
  grid-template-columns: 1fr 56px 1fr;
  align-items: start;
}

.name {
  grid-column: 2;
  justify-self: center;
  width: 30px;
  font-size: 30px;
  line-height: 37px;
  color: #666;
  word-break: break-all;
}

.current .name {
  width: 35px;
  font-size: 35px;
  line-height: 43px;
  font-weight: 500;
  color: #3385ff;
}

.badges {
  display: flex;
  flex-direction: column;
  gap: 4px;
  padding-top: 4px;
}

.badge {
  width: 40px;
  padding: 1px 7px;
  border-radius: 7px;
  color: #fff;
  font-size: 26px;
  line-height: 31px;
  text-align: center;
  word-break: break-all;
}

.line2 {
  background: #005f9a;
}

.line4 {
  background: #008c98;
}

.nearest {
  padding: 5px 6px 4px;
  border: 1px solid #8edabc;
  background: #e1f5ed;
  color: #19b27a;
}

/* bottom bar */
.bottom {
  position: relative;
  padding-bottom: 19px;
  background: #fff;
  box-shadow: 0 -4px 20px rgba(0, 0, 0, 0.14);
}

.actions {
  display: flex;
  gap: 81px;
  padding: 26px 73px 76px 91px;
}

.action {
  display: flex;
  flex-direction: column;
  align-items: center;
  gap: 7px;
  padding-top: 3px;
  line-height: 40px;
  font-weight: 500;
  color: #999;
}

.action:first-child {
  margin-right: 16px;
}

.action svg {
  fill: #999;
}

.refresh {
  display: flex;
  align-items: center;
  justify-content: center;
  gap: 8px;
  flex: 1;
  height: 89px;
  border: 2px solid #3385ff;
  border-radius: 45px;
  font-weight: 500;
  color: #3385ff;
}

.home-bar {
  width: 352px;
  height: 12px;
  margin: 0 auto;
  border-radius: 6px;
  background: #000;
}
```
